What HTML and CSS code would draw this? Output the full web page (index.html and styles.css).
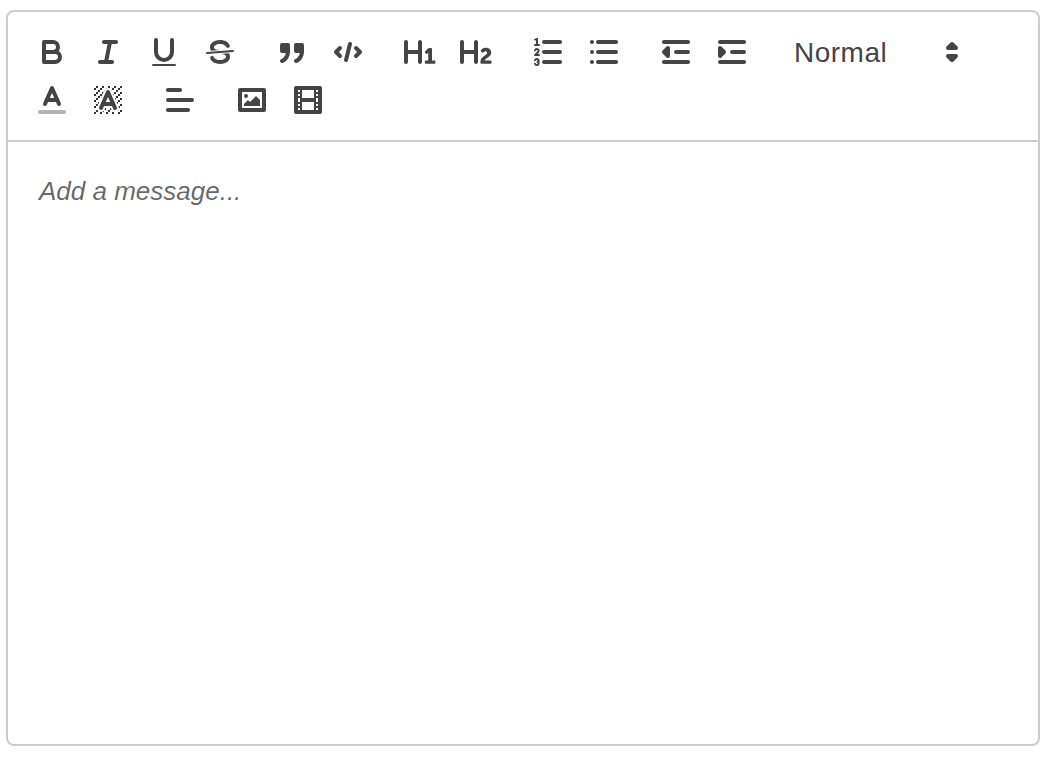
FILE: index.html
```html
<!DOCTYPE html>
<html lang="en">
<head>
<meta charset="utf-8">
<title>Editor</title>
<link rel="stylesheet" href="styles.css">
</head>
<body>
<div class="editor-box">
  <div class="toolbar">
    <span class="group">
      <button class="btn" type="button"><svg viewBox="0 0 18 18"><path class="s" d="M5,4H9.5A2.5,2.5,0,0,1,12,6.5v0A2.5,2.5,0,0,1,9.5,9H5A0,0,0,0,1,5,9V4A0,0,0,0,1,5,4Z"/><path class="s" d="M5,9h5.5A2.5,2.5,0,0,1,13,11.5v0A2.5,2.5,0,0,1,10.5,14H5a0,0,0,0,1,0,0V9A0,0,0,0,1,5,9Z"/></svg></button>
      <button class="btn" type="button"><svg viewBox="0 0 18 18"><line class="s" x1="7" x2="13" y1="4" y2="4"/><line class="s" x1="5" x2="11" y1="14" y2="14"/><line class="s" x1="8" x2="10" y1="14" y2="4"/></svg></button>
      <button class="btn" type="button"><svg viewBox="0 0 18 18"><path class="s" d="M5,3V9a4.012,4.012,0,0,0,4,4H9a4.012,4.012,0,0,0,4-4V3"/><rect class="f" height="1" rx="0.5" ry="0.5" width="12" x="3" y="15"/></svg></button>
      <button class="btn" type="button"><svg viewBox="0 0 18 18"><line class="s thin" x1="15.5" x2="2.5" y1="8.5" y2="9.5"/><path class="f" d="M9.007,8C6.542,7.791,6,7.519,6,6.5,6,5.792,7.283,5,9,5c1.571,0,2.765.679,2.969,1.309a1,1,0,0,0,1.9-.617C13.356,4.106,11.354,3,9,3,6.2,3,4,4.538,4,6.5a3.2,3.2,0,0,0,.5,1.843Z"/><path class="f" d="M8.984,10C11.457,10.208,12,10.479,12,11.5c0,.708-1.283,1.5-3,1.5-1.571,0-2.765-.679-2.969-1.309a1,1,0,1,0-1.9.617C4.644,13.894,6.646,15,9,15c2.8,0,5-1.538,5-3.5a3.2,3.2,0,0,0-.5-1.843Z"/></svg></button>
    </span>
    <span class="group">
      <button class="btn" type="button"><svg viewBox="0 0 18 18"><rect class="f s" height="3" width="3" x="4" y="5.5"/><rect class="f s" height="3" width="3" x="11" y="5.5"/><path class="s" d="M7,8.5c0,4.031-3,5-3,5"/><path class="s" d="M14,8.5c0,4.031-3,5-3,5"/></svg></button>
      <button class="btn" type="button"><svg viewBox="0 0 18 18"><polyline class="s" points="5 7 3 9 5 11"/><polyline class="s" points="13 7 15 9 13 11"/><line class="s" x1="10" x2="8" y1="5" y2="13"/></svg></button>
    </span>
    <span class="group">
      <button class="btn" type="button"><svg viewBox="0 0 18 18"><path class="f" d="M10,4V14a1,1,0,0,1-2,0V10H3v4a1,1,0,0,1-2,0V4A1,1,0,0,1,3,4V8H8V4a1,1,0,0,1,2,0Zm6.06787,9.209H14.98975V7.59863a.54085.54085,0,0,0-.605-.60547h-.62744a1.01119,1.01119,0,0,0-.748.29688L11.645,8.56641a.5435.5435,0,0,0-.022.8584l.28613.30762a.53861.53861,0,0,0,.84717.0332l.09912-.08789a1.2137,1.2137,0,0,0,.2417-.35254h.02246s-.01123.30859-.01123.60547V13.209H12.041a.54085.54085,0,0,0-.605.60547v.43945a.54085.54085,0,0,0,.605.60547h4.02686a.54085.54085,0,0,0,.605-.60547v-.43945A.54085.54085,0,0,0,16.06787,13.209Z"/></svg></button>
      <button class="btn" type="button"><svg viewBox="0 0 18 18"><path class="f" d="M16.73975,13.81445v.43945a.54085.54085,0,0,1-.605.60547H11.855a.58392.58392,0,0,1-.64893-.60547V14.0127c0-2.90527,3.39941-3.42187,3.39941-4.55469a.77675.77675,0,0,0-.84717-.78125,1.17684,1.17684,0,0,0-.83594.38477c-.2749.26367-.561.374-.85791.13184l-.4292-.34082c-.30811-.24219-.38525-.51758-.1543-.81445a2.97155,2.97155,0,0,1,2.45361-1.17676,2.45393,2.45393,0,0,1,2.68408,2.40918c0,2.45312-3.1792,2.92676-3.27832,3.93848h2.79443A.54085.54085,0,0,1,16.73975,13.81445ZM9,3A.99974.99974,0,0,0,8,4V8H3V4A1,1,0,0,0,1,4V14a1,1,0,0,0,2,0V10H8v4a1,1,0,0,0,2,0V4A.99974.99974,0,0,0,9,3Z"/></svg></button>
    </span>
    <span class="group">
      <button class="btn" type="button"><svg viewBox="0 0 18 18"><line class="s" x1="7" x2="15" y1="4" y2="4"/><line class="s" x1="7" x2="15" y1="9" y2="9"/><line class="s" x1="7" x2="15" y1="14" y2="14"/><line class="s thin" x1="2.5" x2="4.5" y1="5.5" y2="5.5"/><path class="f" d="M3.5,6A0.5,0.5,0,0,1,3,5.5V3.085l-0.276.138A0.5,0.5,0,0,1,2.053,3c-0.124-.247-0.023-0.324.224-0.447l1-.5A0.5,0.5,0,0,1,4,2.5v3A0.5,0.5,0,0,1,3.5,6Z"/><path class="s thin" d="M4.5,10.5h-2c0-.234,1.85-1.076,1.85-2.234A0.959,0.959,0,0,0,2.5,8.156"/><path class="s thin" d="M2.5,14.846a0.959,0.959,0,0,0,1.85-.109A0.7,0.7,0,0,0,3.75,14a0.688,0.688,0,0,0,.6-0.736,0.959,0.959,0,0,0-1.85-.109"/></svg></button>
      <button class="btn" type="button"><svg viewBox="0 0 18 18"><line class="s" x1="6" x2="15" y1="4" y2="4"/><line class="s" x1="6" x2="15" y1="9" y2="9"/><line class="s" x1="6" x2="15" y1="14" y2="14"/><line class="s" x1="3" x2="3" y1="4" y2="4"/><line class="s" x1="3" x2="3" y1="9" y2="9"/><line class="s" x1="3" x2="3" y1="14" y2="14"/></svg></button>
    </span>
    <span class="group">
      <button class="btn" type="button"><svg viewBox="0 0 18 18"><line class="s" x1="3" x2="15" y1="14" y2="14"/><line class="s" x1="3" x2="15" y1="4" y2="4"/><line class="s" x1="9" x2="15" y1="9" y2="9"/><polyline class="f s" points="5 7 5 11 3 9 5 7"/></svg></button>
      <button class="btn" type="button"><svg viewBox="0 0 18 18"><line class="s" x1="3" x2="15" y1="14" y2="14"/><line class="s" x1="3" x2="15" y1="4" y2="4"/><line class="s" x1="9" x2="15" y1="9" y2="9"/><polyline class="f s" points="3 7 3 11 5 9 3 7"/></svg></button>
    </span>
    <span class="group">
      <span class="picker"><span class="picker-text">Normal</span><svg class="picker-arrow" viewBox="0 0 18 18"><polygon class="s" points="7 11 9 13 11 11 7 11"/><polygon class="s" points="7 7 9 5 11 7 7 7"/></svg></span>
    </span>
    <span class="group">
      <button class="btn" type="button"><svg viewBox="0 0 18 18"><line class="s faint" x1="3" x2="15" y1="15" y2="15"/><polyline class="s" points="5.5 11 9 3 12.5 11"/><line class="s" x1="11.63" x2="6.38" y1="9" y2="9"/></svg></button>
      <button class="btn" type="button"><svg viewBox="0 0 18 18"><g class="dither"><polygon points="6 6.868 6 6 5 6 5 7 5.942 7 6 6.868"/><rect height="1" width="1" x="4" y="4"/><polygon points="6.817 5 6 5 6 6 6.38 6 6.817 5"/><rect height="1" width="1" x="2" y="6"/><rect height="1" width="1" x="3" y="5"/><rect height="1" width="1" x="4" y="7"/><polygon points="4 11.439 4 11 3 11 3 12 3.755 12 4 11.439"/><rect height="1" width="1" x="2" y="12"/><rect height="1" width="1" x="2" y="9"/><rect height="1" width="1" x="2" y="15"/><polygon points="4.63 10 4 10 4 11 4.192 11 4.63 10"/><rect height="1" width="1" x="3" y="8"/><path d="M10.832,4.2L11,4.582V4H10.708A1.948,1.948,0,0,1,10.832,4.2Z"/><path d="M7,4.582L7.168,4.2A1.929,1.929,0,0,1,7.292,4H7V4.582Z"/><path d="M8,13H7.683l-0.351.8a1.933,1.933,0,0,1-.124.2H8V13Z"/><rect height="1" width="1" x="12" y="2"/><rect height="1" width="1" x="11" y="3"/><path d="M9,3H8V3.282A1.985,1.985,0,0,1,9,3Z"/><rect height="1" width="1" x="2" y="3"/><rect height="1" width="1" x="6" y="2"/><rect height="1" width="1" x="3" y="2"/><rect height="1" width="1" x="5" y="3"/><rect height="1" width="1" x="9" y="2"/><rect height="1" width="1" x="15" y="14"/><polygon points="13.447 10.174 13.469 10.225 13.472 10.232 13.808 11 14 11 14 10 13.37 10 13.447 10.174"/><rect height="1" width="1" x="13" y="7"/><rect height="1" width="1" x="15" y="5"/><rect height="1" width="1" x="14" y="6"/><rect height="1" width="1" x="15" y="8"/><rect height="1" width="1" x="14" y="9"/><path d="M3.775,14H3v1H4V14.314A1.97,1.97,0,0,1,3.775,14Z"/><rect height="1" width="1" x="14" y="3"/><polygon points="12 6.868 12 6 11.62 6 12 6.868"/><rect height="1" width="1" x="15" y="2"/><rect height="1" width="1" x="12" y="5"/><rect height="1" width="1" x="13" y="4"/><polygon points="12.933 9 13 9 13 8 12.495 8 12.933 9"/><rect height="1" width="1" x="9" y="14"/><rect height="1" width="1" x="8" y="15"/><path d="M6,14.926V15H7V14.316A1.993,1.993,0,0,1,6,14.926Z"/><rect height="1" width="1" x="5" y="15"/><path d="M10.668,13.8L10.317,13H10v1h0.792A1.947,1.947,0,0,1,10.668,13.8Z"/><rect height="1" width="1" x="11" y="15"/><path d="M14.332,12.2a1.99,1.99,0,0,1,.166.8H15V12H14.245Z"/><rect height="1" width="1" x="14" y="15"/><rect height="1" width="1" x="15" y="11"/></g><polyline class="s" points="5.5 13 9 5 12.5 13"/><line class="s" x1="11.63" x2="6.38" y1="11" y2="11"/></svg></button>
    </span>
    <span class="group">
      <button class="btn" type="button"><svg viewBox="0 0 18 18"><line class="s" x1="3" x2="15" y1="9" y2="9"/><line class="s" x1="3" x2="13" y1="14" y2="14"/><line class="s" x1="3" x2="9" y1="4" y2="4"/></svg></button>
    </span>
    <span class="group">
      <button class="btn" type="button"><svg viewBox="0 0 18 18"><rect class="s" height="10" width="12" x="3" y="4"/><circle class="f" cx="6" cy="7" r="1"/><polyline class="f" points="5 12 5 11 7 9 8 10 11 7 13 9 13 12 5 12"/></svg></button>
      <button class="btn" type="button"><svg viewBox="0 0 18 18"><rect class="s" height="12" width="12" x="3" y="3"/><rect class="f" height="12" width="1" x="5" y="3"/><rect class="f" height="12" width="1" x="12" y="3"/><rect class="f" height="2" width="8" x="5" y="8"/><rect class="f" height="1" width="3" x="3" y="5"/><rect class="f" height="1" width="3" x="3" y="7"/><rect class="f" height="1" width="3" x="3" y="10"/><rect class="f" height="1" width="3" x="3" y="12"/><rect class="f" height="1" width="3" x="12" y="5"/><rect class="f" height="1" width="3" x="12" y="7"/><rect class="f" height="1" width="3" x="12" y="10"/><rect class="f" height="1" width="3" x="12" y="12"/></svg></button>
    </span>
  </div>
  <div class="message">Add a message...</div>
</div>
</body>
</html>
```
FILE: styles.css
```css
* {
  box-sizing: border-box;
}

html,
body {
  margin: 0;
  background: #fff;
}

body {
  padding: 10px 10px 12px 6px;
  font-family: "Liberation Sans", Arial, sans-serif;
}

.editor-box {
  display: flex;
  flex-direction: column;
  height: 736px;
  border: 2px solid #ccc;
  border-radius: 8px;
  overflow: hidden;
}

.toolbar {
  display: flex;
  flex-wrap: wrap;
  padding: 16px;
  border-bottom: 2px solid #ccc;
}

.group {
  display: flex;
  margin-right: 16px;
}

.btn {
  display: block;
  width: 56px;
  height: 48px;
  padding: 6px 10px;
  border: 0;
  background: none;
}

.btn svg {
  display: block;
  width: 36px;
  height: 36px;
}

svg .s {
  fill: none;
  stroke: #444;
  stroke-width: 2;
  stroke-linecap: round;
  stroke-linejoin: round;
}

svg .f {
  fill: #444;
}

svg .s.f {
  fill: #444;
}

svg .s.thin {
  stroke-width: 1;
}

svg .s.faint {
  opacity: 0.4;
}

svg .dither {
  fill: #333;
}

.picker {
  position: relative;
  display: block;
  width: 196px;
  height: 48px;
  padding-left: 18px;
  color: #444;
  font-size: 28px;
  line-height: 50px;
}

.picker-text {
  letter-spacing: 0.5px;
}

.picker-arrow {
  position: absolute;
  top: 6px;
  right: 2px;
  width: 36px;
  height: 36px;
}

.message {
  flex: 1;
  padding: 31px 31px;
  color: rgba(0, 0, 0, 0.6);
  font-size: 26px;
  font-style: italic;
  line-height: 37px;
}
```
